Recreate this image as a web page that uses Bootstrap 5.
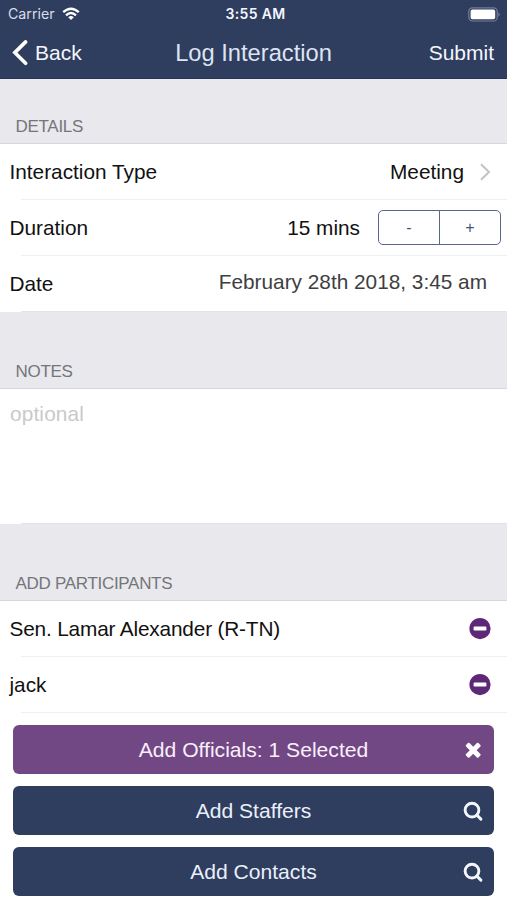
<!DOCTYPE html>
<html lang="en">
<head>
<meta charset="utf-8">
<meta name="viewport" content="width=device-width, initial-scale=1">
<title>Log Interaction</title>
<link href="https://cdn.jsdelivr.net/npm/bootstrap@5.3.0/dist/css/bootstrap.min.css" rel="stylesheet">
<style>
  :root { --navy: #2f3d5e; --plum: #714884; --canvas: #e8e8ed; }
  body { font-family: "Liberation Sans", Arial, sans-serif; font-size: 20.8px; line-height: 26px; color: #111; background: #fff; overflow: hidden; }
  svg { display: block; flex: none; }
  .top-area { background: var(--navy); height: 79px; color: #f3f6fd; border-bottom: 1px solid #253556; }
  .status-line { height: 27px; padding: 1px 7px 0 8px; }
  .status-side { flex: 1 1 0; }
  .carrier { font-family: Inter, sans-serif; font-size: 14.2px; color: #d9deea; }
  .wifi { margin-left: 7px; }
  .clock { font-family: Inter, sans-serif; font-size: 14px; font-weight: 600; letter-spacing: .35px; padding-left: 3px; }
  .title-line { height: 51px; padding: 0 13px 0 12px; }
  .page-title { font-size: 23.7px; line-height: 28px; font-weight: 400; color: #dde4f2; padding-left: 1px; }
  .nav-action { font-size: 21px; color: #f3f6fd; }
  .back-text { padding-left: 7px; }
  .group-title { background: var(--canvas); color: #74767a; font-size: 17px; line-height: 20px; letter-spacing: -.3px; font-weight: 400; padding: 0 0 6px 15.5px; border-bottom: 1px solid #d6d6dc; }
  .group-first { height: 65px; }
  .group-next { height: 77px; }
  .form-line { height: 56px; padding: 0 0 0 9.5px; background: linear-gradient(#f0f0f2, #f0f0f2) 21px 100% / 100% 1px no-repeat; }
  .lifted { padding-bottom: 1px; }
  .section-end { background-image: linear-gradient(#e3e3e7, #e3e3e7); }
  .stepper { width: 123px; height: 35px; margin: 0 6px 0 18px; }
  .stepper .btn { --bs-btn-color: #46527a; --bs-btn-border-color: #59658b; --bs-btn-padding-y: 0; --bs-btn-padding-x: 0; --bs-btn-font-size: 16px; --bs-btn-border-radius: 5px; line-height: 33px; }
  .date-text { color: #3e3e40; margin-right: 20px; padding-bottom: 4px; }
  .notes-box { height: 135px; padding: 12px 10px; color: #c9c9cb; border: 0; resize: none; font-size: 20.8px; line-height: 26px; outline: 0; letter-spacing: .15px; background: linear-gradient(#e3e3e7, #e3e3e7) 21px 100% / 100% 1px no-repeat; }
  .notes-box::placeholder { color: #c9c9cb; }
  .name-text { letter-spacing: -.17px; }
  .action-list { padding: 12px 13px 4px; gap: 12px; }
  .action-list .btn { --bs-btn-color: #eaf0fb; --bs-btn-bg: var(--navy); --bs-btn-border-width: 0; --bs-btn-border-radius: 6px; --bs-btn-padding-y: 0; --bs-btn-padding-x: 0; height: 49px; font-size: 21.1px; line-height: 49px; padding-right: 11px; }
  .action-list .btn-plum { --bs-btn-bg: var(--plum); --bs-btn-color: #fbeffc; }
  .action-label { padding-left: 31px; }
</style>
</head>
<body>
<header class="top-area">
  <div class="status-line d-flex align-items-center">
    <div class="status-side d-flex align-items-center">
      <span class="carrier">Carrier</span>
      <svg class="wifi" width="18" height="14" viewBox="0 0 18 14" fill="none" stroke="#fff" stroke-width="2.4"><path d="M1.2 5.2Q9-1.8 16.8 5.2"/><path d="M4 8.3Q9 3.9 14 8.3"/><path d="M9 13 6.2 10.2Q9 8 11.8 10.2Z" fill="#fff" stroke="none"/></svg>
    </div>
    <span class="clock">3:55 AM</span>
    <div class="status-side d-flex justify-content-end">
      <svg width="32" height="15" viewBox="0 0 32 15"><rect x=".8" y=".8" width="28.4" height="13.2" rx="3.6" fill="none" stroke="#747e98" stroke-width="1.2"/><rect x="2.6" y="2.6" width="24.6" height="9.6" rx="1.8" fill="#fff"/><path d="M30.3 5.2q1.4.8 1.4 2.3t-1.4 2.3z" fill="#747e98"/></svg>
    </div>
  </div>
  <nav class="title-line d-flex align-items-center">
    <a href="#" class="status-side nav-action d-flex align-items-center text-decoration-none">
      <svg width="16" height="26" viewBox="0 0 16 26" fill="none" stroke="#fff" stroke-width="3.6" stroke-linecap="round"><path d="M13.6 1.9 2.8 12.6 13.6 23.3"/></svg>
      <span class="back-text">Back</span>
    </a>
    <h1 class="page-title m-0">Log Interaction</h1>
    <a href="#" class="status-side nav-action text-end text-decoration-none">Submit</a>
  </nav>
</header>

<main>
  <h2 class="group-title group-first d-flex align-items-end m-0">DETAILS</h2>
  <div class="form-line lifted d-flex align-items-center">
    <span>Interaction Type</span>
    <span class="ms-auto">Meeting</span>
    <svg class="ms-3 me-3" width="11" height="18" viewBox="0 0 11 18" fill="none" stroke="#c3c3c7" stroke-width="2"><path d="M1 1.2 9 9 1 16.8"/></svg>
  </div>
  <div class="form-line lifted d-flex align-items-center">
    <span>Duration</span>
    <span class="ms-auto">15 mins</span>
    <div class="stepper btn-group">
      <button type="button" class="btn w-50">-</button>
      <button type="button" class="btn w-50">+</button>
    </div>
  </div>
  <div class="form-line section-end d-flex align-items-center">
    <span>Date</span>
    <span class="date-text ms-auto">February 28th 2018, 3:45 am</span>
  </div>

  <h2 class="group-title group-next d-flex align-items-end m-0">NOTES</h2>
  <textarea class="notes-box d-block w-100" placeholder="optional" aria-label="Notes"></textarea>

  <h2 class="group-title group-next d-flex align-items-end m-0">ADD PARTICIPANTS</h2>
  <div class="form-line d-flex align-items-center">
    <span class="name-text">Sen. Lamar Alexander (R-TN)</span>
    <svg class="ms-auto me-3" width="22" height="22" viewBox="0 0 22 22"><circle cx="11" cy="10.6" r="10.6" fill="#5e2878"/><rect x="4.6" y="8.6" width="12.8" height="4" rx=".8" fill="#fff"/></svg>
  </div>
  <div class="form-line d-flex align-items-center">
    <span>jack</span>
    <svg class="ms-auto me-3" width="22" height="22" viewBox="0 0 22 22"><circle cx="11" cy="10.6" r="10.6" fill="#5e2878"/><rect x="4.6" y="8.6" width="12.8" height="4" rx=".8" fill="#fff"/></svg>
  </div>
  <div class="action-list d-flex flex-column">
    <button type="button" class="btn btn-plum d-flex align-items-center">
      <span class="action-label flex-grow-1">Add Officials: 1 Selected</span>
      <svg width="20" height="20" viewBox="0 0 20 20" fill="#fff" stroke="#fff" stroke-width="2.2" stroke-linejoin="round"><path d="M3.8 5.8 5.7 3.9 10.2 8.4 14.7 3.9 16.6 5.8 12.1 10.3 16.6 14.8 14.7 16.7 10.2 12.2 5.7 16.7 3.8 14.8 8.3 10.3Z"/></svg>
    </button>
    <button type="button" class="btn d-flex align-items-center">
      <span class="action-label flex-grow-1">Add Staffers</span>
      <svg width="20" height="20" viewBox="0 0 20 20" fill="none" stroke="#f3f6fd" stroke-width="2.9"><circle cx="9" cy="9.1" r="6.9"/><path d="m13.9 14.1 4 4" stroke-linecap="round"/></svg>
    </button>
    <button type="button" class="btn d-flex align-items-center">
      <span class="action-label flex-grow-1">Add Contacts</span>
      <svg width="20" height="20" viewBox="0 0 20 20" fill="none" stroke="#f3f6fd" stroke-width="2.9"><circle cx="9" cy="9.1" r="6.9"/><path d="m13.9 14.1 4 4" stroke-linecap="round"/></svg>
    </button>
  </div>
</main>
<script src="https://cdn.jsdelivr.net/npm/bootstrap@5.3.0/dist/js/bootstrap.bundle.min.js"></script>
</body>
</html>
